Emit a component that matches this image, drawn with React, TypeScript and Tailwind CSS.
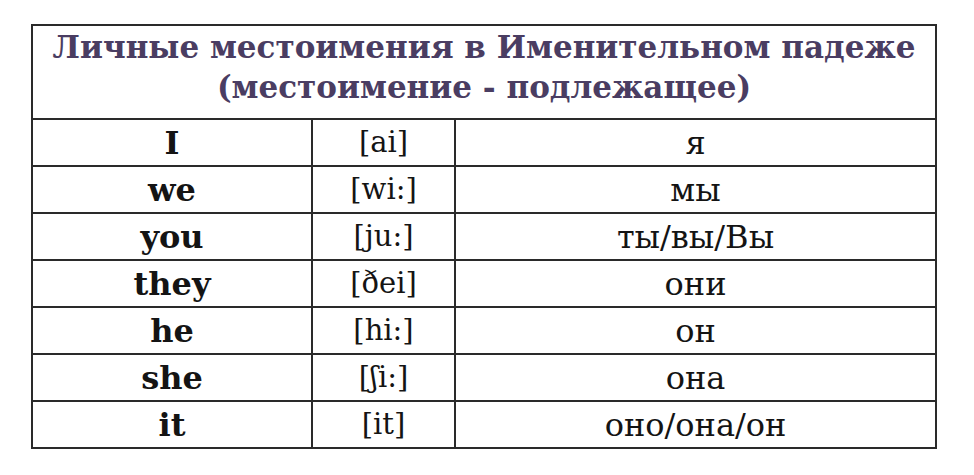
const ROWS: { en: string; ipa: string; ru: string }[] = [
  { en: 'I', ipa: '[ai]', ru: 'я' },
  { en: 'we', ipa: '[wi:]', ru: 'мы' },
  { en: 'you', ipa: '[ju:]', ru: 'ты/вы/Вы' },
  { en: 'they', ipa: '[ðei]', ru: 'они' },
  { en: 'he', ipa: '[hi:]', ru: 'он' },
  { en: 'she', ipa: '[ʃi:]', ru: 'она' },
  { en: 'it', ipa: '[it]', ru: 'оно/она/он' },
];

export default function App() {
  return (
    <div className="w-[974px] h-[475px] bg-white pt-[24px] pl-[31px] font-['DejaVu_Serif',serif] text-[#141414]">
      <table className="w-[906px] border-collapse border-2 border-[#2a2a2a]">
        <thead>
          <tr className="h-[94px]">
            <th
              colSpan={3}
              className="border-2 border-[#2a2a2a] text-[31px] leading-[40px] font-bold text-[#4a3d62] pb-[10px]"
            >
              Личные местоимения в Именительном падеже
              <br />
              (местоимение - подлежащее)
            </th>
          </tr>
        </thead>
        <tbody>
          {ROWS.map((r) => (
            <tr key={r.en} className="h-[47px]">
              <td className="w-[280px] border-2 border-[#2a2a2a] text-center text-[32px] font-bold leading-none">
                {r.en}
              </td>
              <td className="w-[143px] border-2 border-[#2a2a2a] text-center text-[29px] leading-none">
                {r.ipa}
              </td>
              <td className="border-2 border-[#2a2a2a] text-center text-[32px] leading-none">{r.ru}</td>
            </tr>
          ))}
        </tbody>
      </table>
    </div>
  );
}
